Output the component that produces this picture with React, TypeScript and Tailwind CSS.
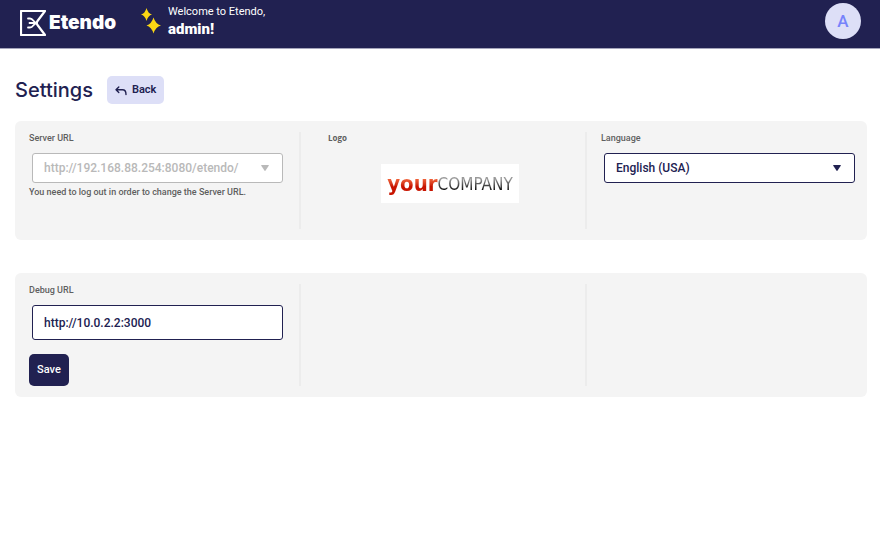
import { useState } from "react";
import type { ReactNode } from "react";

function EtendoMark() {
  return (
    <svg viewBox="0 0 26 26" className="h-[26px] w-[26px]" fill="none" stroke="white" strokeWidth="2.2" strokeLinecap="round" strokeLinejoin="round" aria-hidden="true">
      <path d="M25 1H1V25H25L17.500 15Q16 13 17.500 11L25 1" />
      <path d="M8 8.500H10C13.500 8.500 13.500 13 17 13C13.500 13 13.500 17.500 10 17.500H8M9.500 13H16" strokeWidth="1.800" />
    </svg>
  );
}

function Sparkles() {
  return (
    <svg viewBox="0 0 20 26" className="h-[26px] w-5" fill="#fad614" aria-hidden="true">
      <path d="M5.500 0Q7 5.500 11 6.500Q7 7.500 5.500 13Q4 7.500 0 6.500Q4 5.500 5.500 0Z" />
      <path d="M12.500 9.500Q14.500 16 20 17.500Q14.500 19 12.500 25.500Q10.500 19 5.500 17.500Q10.500 16 12.500 9.500Z" />
    </svg>
  );
}

function BackArrow() {
  return (
    <svg viewBox="0 0 12 10" className="h-[10px] w-3" fill="none" stroke="currentColor" strokeWidth="1.4" strokeLinecap="round" strokeLinejoin="round" aria-hidden="true">
      <path d="M3.800 1L1 3.800L3.800 6.600M1 3.800H7.500Q11 3.800 11 8.500" />
    </svg>
  );
}

function Header() {
  return (
    <header className="flex h-[49px] items-start justify-between border-b border-[#a5a5bb] bg-[#212151] pr-[19px] pl-5 text-white">
      <div className="flex">
        <div className="mt-2 flex w-[121px] items-center gap-[3px]">
          <EtendoMark />
          <span className="font-['Inter',sans-serif] text-[19px] leading-6 font-black">Etendo</span>
        </div>
        <div className="mt-2">
          <Sparkles />
        </div>
        <div className="mt-1 ml-[7px]">
          <p className="text-[11px] leading-4">Welcome to Etendo,</p>
          <p className="text-[15px] leading-[18px] font-black">admin!</p>
        </div>
      </div>
      <button type="button" className="mt-[3px] flex h-9 w-9 items-center justify-center rounded-full bg-[#dddff7] pt-[2px] text-[17px] font-medium text-[#7683fb]">
        A
      </button>
    </header>
  );
}

function Card({ children }: { children: ReactNode }) {
  return (
    <section className="grid grid-cols-[286fr_286fr_280fr] rounded-md bg-[#f4f4f4] py-[11px]">
      {children}
    </section>
  );
}

const labelClass = "block text-[9px] leading-3 font-medium text-[#5f5f5f]";

type SelectFieldProps = {
  id: string;
  label: string;
  options: string[];
  disabled?: boolean;
};

function SelectField({ id, label, options, disabled }: SelectFieldProps) {
  return (
    <>
      <label htmlFor={id} className={labelClass}>{label}</label>
      <div className={`relative mt-[9px] ml-[3px] ${disabled ? "text-[#b9b9b9]" : "text-[#212151]"}`}>
        <select
          id={id}
          disabled={disabled}
          className="block h-[30px] w-full appearance-none rounded-[3px] border border-current bg-white pr-8 pl-[11px] text-[12px] font-medium opacity-100"
        >
          {options.map((option) => (
            <option key={option}>{option}</option>
          ))}
        </select>
        <svg viewBox="0 0 8 6" className="pointer-events-none absolute top-3 right-[14px] h-[6px] w-2" fill="currentColor" aria-hidden="true">
          <path d="M0.500 0H7.500Q8 0 7.700 0.700L4.600 5.600Q4 6.200 3.400 5.600L0.300 0.700Q0 0 0.500 0Z" />
        </svg>
      </div>
    </>
  );
}

export default function App() {
  const [debugUrl, setDebugUrl] = useState("http://10.0.2.2:3000");

  return (
    <div className="min-h-screen bg-white font-['Roboto',sans-serif]">
      <Header />
      <main className="pt-[27px] pr-[13px] pl-[15px]">
        <div className="flex items-center gap-[14px]">
          <h1 className="font-['Inter',sans-serif] text-[20px] leading-7 font-medium text-[#212151]">Settings</h1>
          <button type="button" className="flex h-7 items-center gap-[5px] rounded-[5px] bg-[#dddff7] px-2 pt-px text-[11px] font-semibold text-[#212151]">
            <BackArrow />
            Back
          </button>
        </div>

        <div className="mt-[17px] flex flex-col gap-[33px]">
          <Card>
            <div className="min-h-[97px] border-r-2 border-[#ececec] pr-4 pl-[14px]">
              <SelectField id="server-url" label="Server URL" options={["http://192.168.88.254:8080/etendo/"]} disabled />
              <p className="mt-[3px] text-[9px] leading-3 font-medium text-[#5f5f5f]">
                You need to log out in order to change the Server URL.
              </p>
            </div>
            <div className="border-r-2 border-[#ececec] pl-[27px]">
              <h2 className="font-['Open_Sans',sans-serif] text-[8px] leading-3 font-bold text-[#5f5f5f]">Logo</h2>
              <div className="mt-5 ml-[53px] flex h-[39px] w-[138px] items-center justify-center bg-white font-['DejaVu_Sans_Condensed','DejaVu_Sans',sans-serif] leading-6">
                <span className="bg-linear-to-b from-[#f06038] from-30% to-[#c81400] to-60% bg-clip-text text-[22px] font-bold text-transparent">your</span>
                <span className="bg-linear-to-b from-[#999999] from-30% to-[#111111] to-75% bg-clip-text text-[17px] text-transparent">COMPANY</span>
              </div>
            </div>
            <div className="pr-3 pl-[14px]">
              <SelectField id="language" label="Language" options={["English (USA)"]} />
            </div>
          </Card>

          <Card>
            <div className="min-h-[101px] border-r-2 border-[#ececec] pr-4 pl-[14px]">
              <label htmlFor="debug-url" className={labelClass}>Debug URL</label>
              <input
                id="debug-url"
                type="text"
                value={debugUrl}
                onChange={(event) => setDebugUrl(event.target.value)}
                className="mt-[9px] ml-[3px] block h-[35px] w-[calc(100%-3px)] rounded-[3px] border border-[#212151] bg-white px-[11px] text-[12px] font-medium text-[#212151]"
              />
              <button type="button" className="mt-[14px] h-8 rounded-[5px] bg-[#212151] px-2 pt-px text-[11px] font-medium text-white">
                Save
              </button>
            </div>
            <div className="border-r-2 border-[#ececec]" />
            <div />
          </Card>
        </div>
      </main>
    </div>
  );
}
